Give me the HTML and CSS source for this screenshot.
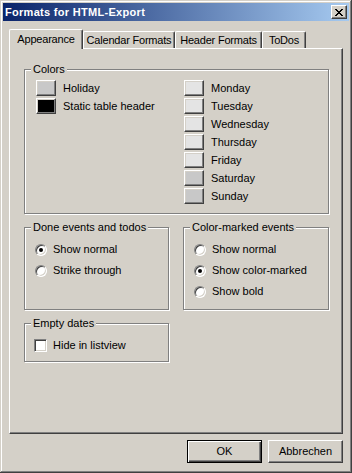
FILE: index.html
```html
<!DOCTYPE html>
<html>
<head>
<meta charset="utf-8">
<link rel="stylesheet" href="styles.css">
</head>
<body>
<div class="window">
  <div class="titlebar">
    <span class="title">Formats for HTML-Export</span>
    <span class="close">
      <svg width="8" height="7" viewBox="0 0 8 7" shape-rendering="crispEdges">
        <path d="M0 0h2v1h-2zM6 0h2v1h-2zM1 1h2v1h-2zM5 1h2v1h-2zM2 2h4v1h-4zM3 3h2v1h-2zM2 4h4v1h-4zM1 5h2v1h-2zM5 5h2v1h-2zM0 6h2v1h-2zM6 6h2v1h-2z" fill="#000"/>
      </svg>
    </span>
  </div>
  <div class="content">
    <div class="tabs">
      <div class="tab active w-app">Appearance</div>
      <div class="tab w-cal">Calendar Formats</div>
      <div class="tab w-head">Header Formats</div>
      <div class="tab w-todo">ToDos</div>
    </div>
    <div class="panel">
      <div class="grid">
        <div class="group colors">
          <span class="legend">Colors</span>
          <div class="color-cols">
            <div class="col col-left">
              <div class="crow"><span class="swatch sw-gray"></span><span>Holiday</span></div>
              <div class="crow"><span class="swatch sw-black"></span><span>Static table header</span></div>
            </div>
            <div class="col">
              <div class="crow"><span class="swatch sw-light"></span><span>Monday</span></div>
              <div class="crow"><span class="swatch sw-light"></span><span>Tuesday</span></div>
              <div class="crow"><span class="swatch sw-light"></span><span>Wednesday</span></div>
              <div class="crow"><span class="swatch sw-light"></span><span>Thursday</span></div>
              <div class="crow"><span class="swatch sw-light"></span><span>Friday</span></div>
              <div class="crow"><span class="swatch sw-gray"></span><span>Saturday</span></div>
              <div class="crow"><span class="swatch sw-gray"></span><span>Sunday</span></div>
            </div>
          </div>
        </div>
        <div class="group done">
          <span class="legend">Done events and todos</span>
          <div class="opts">
            <div class="opt"><span class="radio checked"></span><span>Show normal</span></div>
            <div class="opt"><span class="radio"></span><span>Strike through</span></div>
          </div>
        </div>
        <div class="group marked">
          <span class="legend">Color-marked events</span>
          <div class="opts">
            <div class="opt"><span class="radio"></span><span>Show normal</span></div>
            <div class="opt"><span class="radio checked"></span><span>Show color-marked</span></div>
            <div class="opt"><span class="radio"></span><span>Show bold</span></div>
          </div>
        </div>
        <div class="group empty">
          <span class="legend">Empty dates</span>
          <div class="opts chk">
            <div class="opt"><span class="checkbox"></span><span>Hide in listview</span></div>
          </div>
        </div>
      </div>
    </div>
    <div class="buttons">
      <div class="btn default">OK</div>
      <div class="btn">Abbrechen</div>
    </div>
  </div>
</div>
</body>
</html>
```
FILE: styles.css
```css
html, body {
  margin: 0;
  padding: 0;
  background: #d4d0c8;
}
* { box-sizing: border-box; }

.window {
  width: 352px;
  height: 473px;
  padding: 3px;
  background: #d4d0c8;
  font-family: "Liberation Sans", Arial, sans-serif;
  font-size: 11px;
  line-height: 13px;
  color: #000;
  box-shadow: inset -1px -1px #404040, inset 1px 1px #d4d0c8, inset -2px -2px #808080, inset 2px 2px #ffffff;
}

.titlebar {
  height: 18px;
  display: flex;
  align-items: center;
  justify-content: space-between;
  padding: 0 2px 0 2px;
  background: linear-gradient(to right, #0a246a, #a6caf0);
}
.title {
  color: #fff;
  font-weight: bold;
  letter-spacing: 0.3px;
}
.close {
  width: 16px;
  height: 14px;
  display: flex;
  align-items: center;
  justify-content: center;
  background: #d4d0c8;
  border: 1px solid;
  border-color: #fff #404040 #404040 #fff;
  box-shadow: inset -1px -1px #808080;
}
.close svg { display: block; margin-left: -1px; }

.content {
  padding: 8px 0 0 6px;
}

.tabs {
  display: flex;
  align-items: flex-end;
  height: 19px;
}
.tab {
  height: 17px;
  border: 1px solid;
  border-bottom: none;
  border-color: #fff #404040 #fff #fff;
  border-radius: 2px 2px 0 0;
  box-shadow: inset -1px 0 #808080;
  text-align: center;
  padding-top: 2px;
  white-space: nowrap;
  letter-spacing: -0.2px;
}
.tab.active {
  height: 20px;
  margin-bottom: -1px;
  padding-top: 3px;
  position: relative;
  z-index: 1;
  background: #d4d0c8;
}
.w-app { width: 74px; }
.w-cal { width: 92px; }
.w-head { width: 87px; }
.w-todo { width: 44px; }

.panel {
  width: 334px;
  height: 386px;
  border: 1px solid;
  border-color: #fff #404040 #404040 #fff;
  box-shadow: inset -1px -1px #808080;
  padding: 20px 0 0 14px;
}

.grid {
  display: grid;
  grid-template-columns: 145px 146px;
  grid-template-rows: 145px 83px 39px;
  column-gap: 14px;
  row-gap: 13px;
}

.group {
  position: relative;
  border: 1px solid #808080;
  box-shadow: 1px 1px 0 #fff, inset 1px 1px 0 #fff;
}
.legend {
  position: absolute;
  top: -7px;
  left: 6px;
  padding: 0 2px;
  background: #d4d0c8;
  white-space: nowrap;
}

.colors {
  grid-column: 1 / -1;
  padding: 10px 0 0 11px;
}
.color-cols { display: flex; }
.col {
  display: flex;
  flex-direction: column;
  gap: 2px;
}
.col-left { width: 148px; }
.crow {
  display: flex;
  align-items: center;
  height: 16px;
  gap: 7px;
  white-space: nowrap;
}
.swatch {
  width: 20px;
  height: 16px;
  flex: none;
  border: 1px solid;
  border-color: #fff #404040 #404040 #fff;
  box-shadow: inset -1px -1px #808080, inset 1px 1px #d4d0c8;
}
.sw-gray { background: #c8c8c8; }
.sw-light { background: #e4e4e4; }
.sw-black { background: #000; }

.done { grid-column: 1; grid-row: 2; }
.marked { grid-column: 2; grid-row: 2; }
.empty { grid-column: 1; grid-row: 3; }

.opts {
  display: flex;
  flex-direction: column;
  gap: 8px;
  padding: 15px 0 0 10px;
}
.opt {
  display: flex;
  align-items: center;
  height: 13px;
  gap: 6px;
  white-space: nowrap;
}
.radio {
  width: 12px;
  height: 12px;
  flex: none;
  border-radius: 50%;
  border: 1px solid;
  border-color: #808080 #fff #fff #808080;
  background: #fff;
  box-shadow: inset 1px 1px #404040, inset -1px -1px #d4d0c8;
  display: flex;
  align-items: center;
  justify-content: center;
}
.radio.checked::after {
  content: "";
  width: 4px;
  height: 4px;
  border-radius: 50%;
  background: #000;
}
.chk { padding: 15px 0 0 9px; }
.checkbox {
  width: 13px;
  height: 13px;
  flex: none;
  border: 1px solid;
  border-color: #808080 #fff #fff #808080;
  background: #fff;
  box-shadow: inset 1px 1px #404040, inset -1px -1px #d4d0c8;
}

.buttons {
  display: flex;
  justify-content: flex-end;
  gap: 6px;
  margin-top: 6px;
  width: 334px;
}
.btn {
  width: 75px;
  height: 23px;
  display: flex;
  align-items: center;
  justify-content: center;
  border: 1px solid;
  border-color: #fff #404040 #404040 #fff;
  box-shadow: inset -1px -1px #808080, inset 1px 1px #d4d0c8;
}
.btn.default {
  border-color: #000;
  box-shadow: inset 1px 1px #fff, inset -1px -1px #404040, inset -2px -2px #808080;
}
```
